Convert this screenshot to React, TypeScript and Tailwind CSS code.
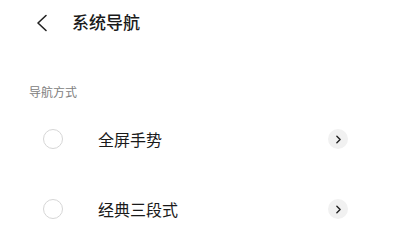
import { ChevronRight } from 'lucide-react'

const OPTIONS = ['全屏手势', '经典三段式']

function OptionRow({ label }: { label: string }) {
  return (
    <div className="flex h-[70px] items-center">
      <div className="ml-[43px] h-[20px] w-[20px] rounded-full border-[1.5px] border-[#d6d6d6]" />
      <span className="ml-[35px] flex-1 text-[16px] text-[#1a1a1a]">{label}</span>
      <div className="mr-[51px] flex h-[20px] w-[20px] items-center justify-center rounded-full bg-[#f1f1f1]">
        <ChevronRight size={13} strokeWidth={2.6} className="text-[#222]" />
      </div>
    </div>
  )
}

export default function App() {
  return (
    <div
      className="h-[232px] w-[399px] overflow-hidden bg-white"
      style={{ fontFamily: '"Noto Sans CJK SC", "Noto Sans", sans-serif' }}
    >
      <div className="flex h-[44px] items-center">
        <svg width="12" height="18" viewBox="0 0 12 18" className="ml-[36px] mt-[1px]">
          <polyline points="10,1.5 2,9 10,16.5" fill="none" stroke="#222" strokeWidth="1.6" strokeLinecap="round" strokeLinejoin="round" />
        </svg>
        <h1 className="ml-[24px] text-[17px] font-medium text-[#1a1a1a]">系统导航</h1>
      </div>
      <p className="mt-[40px] pl-[29px] text-[12px] leading-[16px] text-[#808080]">导航方式</p>
      <div className="mt-[4px]">
        {OPTIONS.map((o) => (
          <OptionRow key={o} label={o} />
        ))}
      </div>
    </div>
  )
}
